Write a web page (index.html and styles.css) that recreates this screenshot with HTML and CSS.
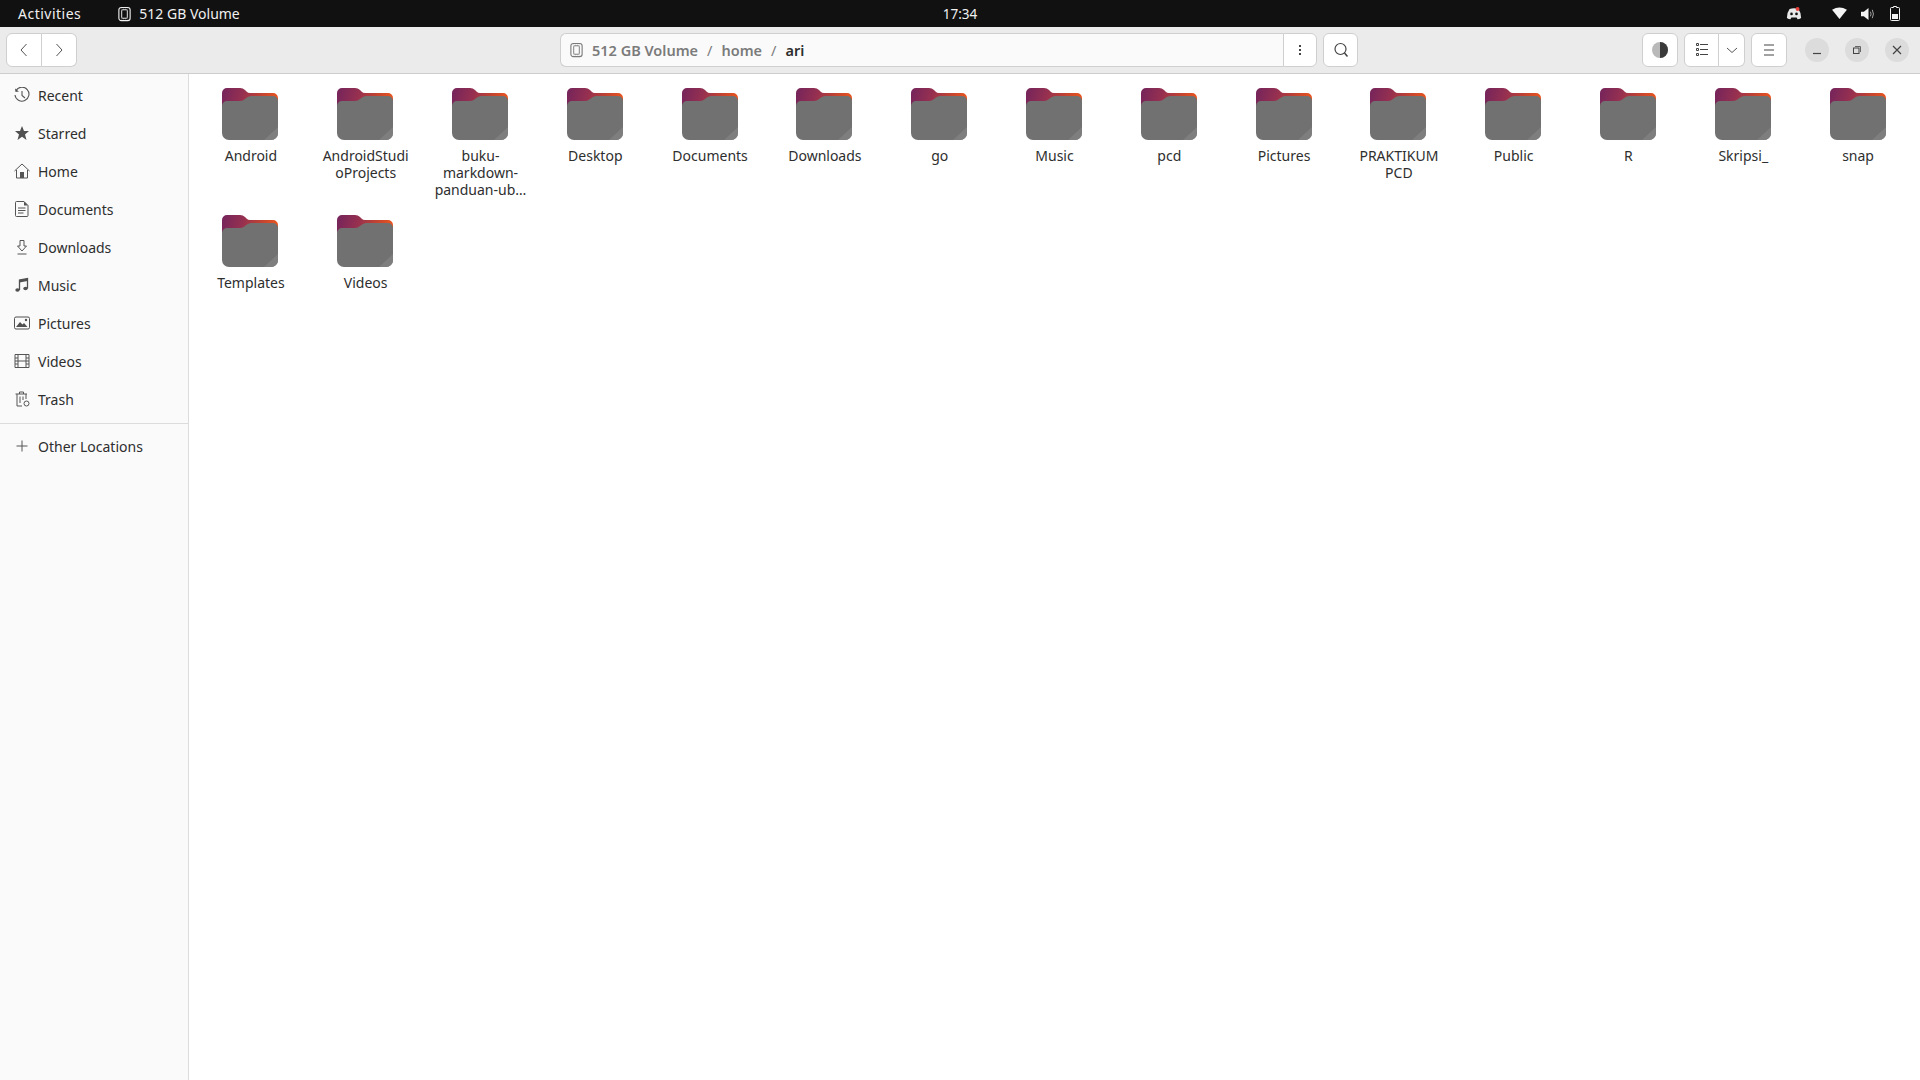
FILE: index.html
```html
<!DOCTYPE html>
<html>
<head>
  <title>512 GB Volume</title>
  <link rel="stylesheet" href="styles.css">
</head>
<body>
  <svg class="defs" width="0" height="0">
    <defs>
      <linearGradient id="tabGradient" x1="0" y1="0" x2="1" y2="0.15">
        <stop offset="0" stop-color="#74245c"/>
        <stop offset="0.4" stop-color="#963050"/>
        <stop offset="0.75" stop-color="#c5452f"/>
        <stop offset="1" stop-color="#e9541f"/>
      </linearGradient>
      <symbol id="folder" viewBox="0 0 56 52">
        <path d="M5 0H18Q21 0 23 2L24.500 3.500Q26 5 28 5H51A5 5 0 0 1 56 10V30H0V5A5 5 0 0 1 5 0Z" fill="url(#tabGradient)"/>
        <path d="M0 18A5 5 0 0 1 5 13H18Q21 13 23 11L25 9.500Q27 8 29 8H51A5 5 0 0 1 56 13V45A7 7 0 0 1 49 52H7A7 7 0 0 1 0 45Z" fill="#717171"/>
        <path d="M56 39V45A7 7 0 0 1 49 52H42Z" fill="#7e7e7e"/>
      </symbol>
      <symbol id="chip" viewBox="0 0 16 16">
        <rect x="2" y="1" width="12" height="14" rx="2.500" fill="none" stroke="currentColor" stroke-width="1.200"/>
        <rect x="5" y="3.500" width="6" height="9" rx="1" fill="none" stroke="currentColor"/>
        <path d="M5 2.500V3M7 2.500V3M9 2.500V3M11 2.500V3M5 13V13.500M7 13V13.500M9 13V13.500M11 13V13.500" stroke="currentColor"/>
      </symbol>
    </defs>
  </svg>

  <div class="topbar">
    <span class="activities">Activities</span>
    <span class="app-name">
      <svg class="chip-icon"><use href="#chip"/></svg>
      512 GB Volume
    </span>
    <span class="clock">17:34</span>
    <div class="tray">
      <svg class="tray-discord" viewBox="0 0 18 14">
        <path d="M4 2Q9 0 14 2Q17 6 17 12Q15 13.500 13 13.500L12 11.500H6L5 13.500Q3 13.500 1 12Q1 6 4 2Z" fill="#e8e8e8"/>
        <circle cx="6.200" cy="7.500" r="1.500" fill="#111"/>
        <circle cx="11.800" cy="7.500" r="1.500" fill="#111"/>
        <circle cx="13" cy="2" r="2.200" fill="#e8413c"/>
      </svg>
      <svg class="tray-wifi" viewBox="0 0 16 14"><path d="M0 3Q8 -2 16 3L8 13Z" fill="#f4f4f4"/></svg>
      <svg class="tray-sound" viewBox="0 0 16 14">
        <path d="M0 4.500H3L8 0.500V13.500L3 9.500H0Z" fill="#f4f4f4"/>
        <path d="M10 4.500Q11.500 7 10 9.500M12 2.500Q14.500 7 12 11.500" fill="none" stroke="#aaa"/>
      </svg>
      <svg class="tray-battery" viewBox="0 0 10 15">
        <path d="M3.500 0.500H6.500V1.500H8.500Q9.500 1.500 9.500 2.500V13.500Q9.500 14.500 8.500 14.500H1.500Q0.500 14.500 0.500 13.500V2.500Q0.500 1.500 1.500 1.500H3.500Z" fill="none" stroke="#f4f4f4"/>
        <rect x="2" y="8" width="6" height="5" fill="#f4f4f4"/>
      </svg>
    </div>
  </div>

  <div class="headerbar">
    <div class="btn-group nav-group">
      <button class="btn btn-nav"><svg class="icon" viewBox="0 0 16 16"><path d="M10.500 2L5 8L10.500 14" fill="none" stroke="#555"/></svg></button>
      <button class="btn btn-nav"><svg class="icon" viewBox="0 0 16 16"><path d="M5.500 2L11 8L5.500 14" fill="none" stroke="#555"/></svg></button>
    </div>

    <div class="btn-group pathbar">
      <div class="path">
        <svg class="chip-icon path-icon"><use href="#chip"/></svg>
        <span class="crumb">512 GB Volume</span>
        <span class="slash">/</span>
        <span class="crumb">home</span>
        <span class="slash">/</span>
        <span class="crumb current">ari</span>
      </div>
      <button class="btn btn-more"><svg class="icon" viewBox="0 0 16 16"><path d="M7 3h2v2H7zM7 7h2v2H7zM7 11h2v2H7z" fill="#444"/></svg></button>
    </div>

    <button class="btn btn-search"><svg class="icon" viewBox="0 0 16 16"><circle cx="7.500" cy="7" r="5.500" fill="none" stroke="#444" stroke-width="1.200"/><path d="M11.500 11L14.500 14.500" stroke="#444" stroke-width="1.500"/></svg></button>

    <button class="btn btn-contrast"><svg class="icon" viewBox="0 0 16 16"><circle cx="8" cy="8" r="8" fill="#b9b9b9"/><path d="M8 0A8 8 0 0 1 8 16Z" fill="#3a3a3a"/></svg></button>

    <div class="btn-group view-group">
      <button class="btn btn-list"><svg class="icon" viewBox="0 0 16 16"><path d="M2.500 1.500h2v2h-2zM2.500 6.500h2v2h-2zM2.500 11.500h2v2h-2z" fill="none" stroke="#444"/><path d="M6 2.500H14M6 7.500H14M6 12.500H14" stroke="#444"/></svg></button>
      <button class="btn btn-arrow"><svg class="icon" viewBox="0 0 16 16"><path d="M3 6L8 10.500L13 6" fill="none" stroke="#555"/></svg></button>
    </div>

    <button class="btn btn-menu"><svg class="icon" viewBox="0 0 16 16"><path d="M3 3H13M3 8H13M3 13H13" stroke="#444"/></svg></button>

    <div class="window-controls">
      <button class="win-btn"><svg class="win-icon" viewBox="0 0 10 10"><path d="M1 8.500H9" stroke="#444" stroke-width="1.200"/></svg></button>
      <button class="win-btn"><svg class="win-icon" viewBox="0 0 10 10"><path d="M3 1.500H8.500V7" fill="none" stroke="#666"/><rect x="1.500" y="3" width="5.500" height="5.500" fill="none" stroke="#444"/></svg></button>
      <button class="win-btn"><svg class="win-icon" viewBox="0 0 10 10"><path d="M1 1L9 9M9 1L1 9" stroke="#444" stroke-width="1.200"/></svg></button>
    </div>
  </div>

  <div class="main">
    <div class="sidebar">
      <div class="side-item">
        <svg class="side-icon" viewBox="0 0 16 16"><path d="M2 3.500A7 7 0 1 1 1 8" fill="none" stroke="#555" stroke-width="1.100"/><path d="M1 1.500L1.500 5L5 4.500Z" fill="#555"/><path d="M8 4V8.500L11 11" fill="none" stroke="#555" stroke-width="1.100"/></svg>
        Recent
      </div>
      <div class="side-item">
        <svg class="side-icon" viewBox="0 0 16 16"><path d="M8 1L10 6H15L11 9.500L12.500 15L8 11.800L3.500 15L5 9.500L1 6H6Z" fill="#505050"/></svg>
        Starred
      </div>
      <div class="side-item">
        <svg class="side-icon" viewBox="0 0 16 16"><path d="M.5 8L8 1L15.500 8M2.500 7V15H13.500V7" fill="none" stroke="#555"/><rect x="6" y="9" width="4" height="6" fill="#555"/></svg>
        Home
      </div>
      <div class="side-item">
        <svg class="side-icon" viewBox="0 0 16 16"><path d="M2.500.5H10L14 4.500V14.500Q14 15.500 13 15.500H2.500Q1.500 15.500 1.500 14.500V1.500Q1.500.5 2.500.5Z" fill="none" stroke="#555"/><path d="M10 .5V4.500H14Z" fill="#555"/><path d="M4 7H11.500M4 9.500H11.500M4 12H9.500" stroke="#555"/></svg>
        Documents
      </div>
      <div class="side-item">
        <svg class="side-icon" viewBox="0 0 16 16"><path d="M6 1.500H10V7H12.500L8 12L3.500 7H6Z" fill="none" stroke="#555"/><path d="M3.500 15H12.500" stroke="#555"/></svg>
        Downloads
      </div>
      <div class="side-item">
        <svg class="side-icon" viewBox="0 0 16 16"><path d="M5.500 13V3L13.500 1.500V11.500" fill="none" stroke="#505050" stroke-width="1.300"/><path d="M5.500 3L13.500 1.500V4L5.500 5.500Z" fill="#505050"/><ellipse cx="3.500" cy="13" rx="2.200" ry="1.800" fill="#505050"/><ellipse cx="11.500" cy="11.500" rx="2.200" ry="1.800" fill="#505050"/></svg>
        Music
      </div>
      <div class="side-item">
        <svg class="side-icon" viewBox="0 0 16 16"><rect x=".5" y="2" width="15" height="12" rx="1.500" fill="none" stroke="#505050"/><path d="M2 12L6 7L8.500 9.500L10 8L13.500 12Z" fill="#505050"/><circle cx="12" cy="5" r="1.200" fill="#505050"/></svg>
        Pictures
      </div>
      <div class="side-item">
        <svg class="side-icon" viewBox="0 0 16 16"><path d="M1 1.500H15V14.500H1ZM4 1.500V14.500M12 1.500V14.500M4 8H12M1 5H4M1 8H4M1 11H4M12 5H15M12 8H15M12 11H15" fill="none" stroke="#555"/></svg>
        Videos
      </div>
      <div class="side-item">
        <svg class="side-icon" viewBox="0 0 16 16"><path d="M1.500 3H13M5.500 3V1H9.500V3M3 3V15H8M12 3V8M6 5.500V12M9 5.500V9" fill="none" stroke="#555"/><circle cx="12.500" cy="12.500" r="2.500" fill="none" stroke="#555"/></svg>
        Trash
      </div>
      <div class="side-sep"></div>
      <div class="side-item">
        <svg class="side-icon" viewBox="0 0 16 16"><path d="M8 2.500V13.500M2.500 8H13.500" stroke="#555"/></svg>
        Other Locations
      </div>
    </div>

    <div class="files">
      <div class="file"><svg class="folder"><use href="#folder"/></svg><span class="file-name">Android</span></div>
      <div class="file"><svg class="folder"><use href="#folder"/></svg><span class="file-name">AndroidStudi<br>oProjects</span></div>
      <div class="file"><svg class="folder"><use href="#folder"/></svg><span class="file-name">buku-<br>markdown-<br>panduan-ub…</span></div>
      <div class="file"><svg class="folder"><use href="#folder"/></svg><span class="file-name">Desktop</span></div>
      <div class="file"><svg class="folder"><use href="#folder"/></svg><span class="file-name">Documents</span></div>
      <div class="file"><svg class="folder"><use href="#folder"/></svg><span class="file-name">Downloads</span></div>
      <div class="file"><svg class="folder"><use href="#folder"/></svg><span class="file-name">go</span></div>
      <div class="file"><svg class="folder"><use href="#folder"/></svg><span class="file-name">Music</span></div>
      <div class="file"><svg class="folder"><use href="#folder"/></svg><span class="file-name">pcd</span></div>
      <div class="file"><svg class="folder"><use href="#folder"/></svg><span class="file-name">Pictures</span></div>
      <div class="file"><svg class="folder"><use href="#folder"/></svg><span class="file-name">PRAKTIKUM<br>PCD</span></div>
      <div class="file"><svg class="folder"><use href="#folder"/></svg><span class="file-name">Public</span></div>
      <div class="file"><svg class="folder"><use href="#folder"/></svg><span class="file-name">R</span></div>
      <div class="file"><svg class="folder"><use href="#folder"/></svg><span class="file-name">Skripsi_</span></div>
      <div class="file"><svg class="folder"><use href="#folder"/></svg><span class="file-name">snap</span></div>
      <div class="file"><svg class="folder"><use href="#folder"/></svg><span class="file-name">Templates</span></div>
      <div class="file"><svg class="folder"><use href="#folder"/></svg><span class="file-name">Videos</span></div>
    </div>
  </div>
</body>
</html>
```

FILE: styles.css
```css
html, body {
  height: 100%;
}

body {
  margin: 0;
  display: flex;
  flex-direction: column;
  overflow: hidden;
  background-color: #fff;
  color: #2e2e2e;
  font-family: "Noto Sans", "Open Sans", sans-serif;
  font-size: 14px;
}

.defs {
  position: absolute;
}

/* top panel */
.topbar {
  flex: none;
  height: 27px;
  display: flex;
  align-items: center;
  position: relative;
  background-color: #111;
  color: #f0f0f0;
}

.activities {
  margin-left: 18px;
  letter-spacing: 0.500px;
}

.app-name {
  display: flex;
  align-items: center;
  gap: 7px;
  margin-left: 36px;
}

.chip-icon {
  width: 15px;
  height: 16px;
}

.clock {
  position: absolute;
  left: 0;
  right: 0;
  text-align: center;
  font-size: 13.500px;
}

.tray {
  margin-left: auto;
  display: flex;
  align-items: center;
  margin-right: 20px;
}

.tray-discord {
  width: 16px;
  height: 13px;
}

.tray-wifi {
  width: 15px;
  height: 13px;
  margin-left: 30px;
}

.tray-sound {
  width: 15px;
  height: 14px;
  margin-left: 14px;
}

.tray-battery {
  width: 10px;
  height: 15px;
  margin-left: 14px;
}

/* header */
.headerbar {
  flex: none;
  height: 47px;
  display: flex;
  align-items: center;
  padding-left: 6px;
  box-sizing: border-box;
  background-color: #ebebeb;
  border-bottom: 1px solid #cdcdcd;
}

.btn {
  height: 34px;
  display: flex;
  align-items: center;
  justify-content: center;
  padding: 0;
  background-color: #fff;
  border: 1px solid #cfcfcf;
  border-radius: 6px;
  box-sizing: border-box;
}

.btn-group {
  display: flex;
  height: 34px;
}

.btn-group .btn {
  border-radius: 0;
}

.btn-group .btn:first-child {
  border-radius: 6px 0 0 6px;
}

.btn-group .btn:last-child {
  border-left: 0;
  border-radius: 0 6px 6px 0;
}

.icon {
  width: 16px;
  height: 16px;
}

.btn-nav {
  width: 35.500px;
}

.pathbar {
  margin-left: 483px;
}

.path {
  width: 723px;
  box-sizing: border-box;
  display: flex;
  align-items: center;
  padding: 0 0 1px 8px;
  background-color: #fafafa;
  border: 1px solid #cfcfcf;
  border-right: 0;
  border-radius: 6px 0 0 6px;
  color: #7b7b7b;
  font-size: 14.500px;
  font-weight: 600;
}

.path-icon {
  margin-right: 8px;
}

.slash {
  margin: 0 9px;
  font-weight: 400;
}

.current {
  color: #2e2e2e;
}

.pathbar .btn-more:last-child {
  width: 34px;
  border-left: 1px solid #cfcfcf;
}

.btn-search {
  width: 35px;
  margin-left: 6px;
}

.btn-contrast {
  width: 36px;
  margin-left: 284px;
}

.view-group {
  margin-left: 6px;
}

.btn-list {
  width: 35px;
}

.btn-arrow {
  width: 26px;
}

.btn-menu {
  width: 36px;
  margin-left: 6px;
}

.window-controls {
  display: flex;
  gap: 16px;
  margin-left: 18px;
}

.win-btn {
  width: 24px;
  height: 24px;
  padding: 0;
  display: flex;
  align-items: center;
  justify-content: center;
  background-color: #dcdcdc;
  border: none;
  border-radius: 50%;
}

.win-icon {
  width: 10px;
  height: 10px;
}

/* sidebar */
.main {
  flex: 1;
  display: flex;
  min-height: 0;
}

.sidebar {
  flex: none;
  width: 189px;
  box-sizing: border-box;
  padding-top: 2px;
  background-color: #fafafa;
  border-right: 1px solid #dcdcdc;
}

.side-item {
  height: 38px;
  display: flex;
  align-items: center;
  gap: 8px;
  padding-left: 14px;
}

.side-icon {
  flex: none;
  width: 16px;
  height: 16px;
}

.side-sep {
  height: 1px;
  margin: 5px 0 3px;
  background-color: #dcdcdc;
}

/* files */
.files {
  flex: 1;
  display: grid;
  grid-template-columns: repeat(15, 114.800px);
  grid-auto-rows: 127px;
  padding: 14px 0 0 4px;
}

.file {
  display: flex;
  flex-direction: column;
  align-items: center;
}

.folder {
  width: 56px;
  height: 52px;
  margin-bottom: 7px;
}

.file-name {
  padding-left: 1px;
  line-height: 17px;
  text-align: center;
  white-space: nowrap;
  color: #2e2e2e;
}
```
